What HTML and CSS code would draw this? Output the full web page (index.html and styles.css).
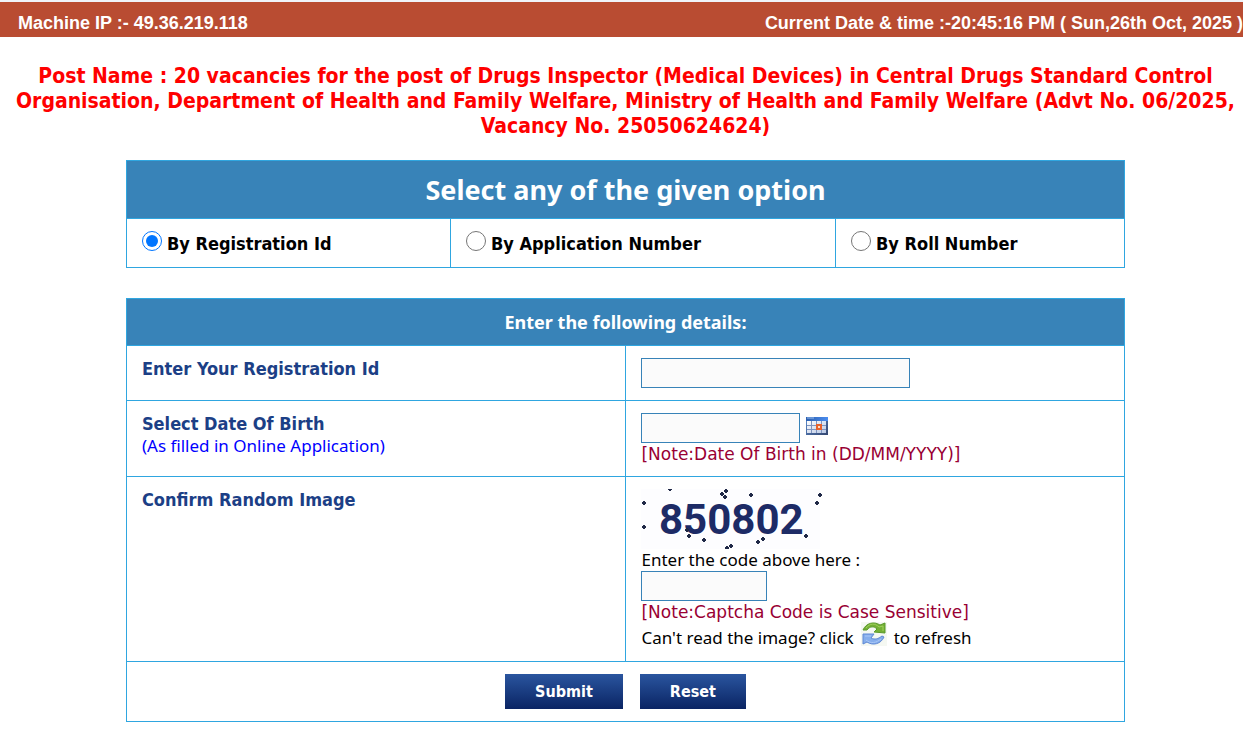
FILE: index.html
```html
<!DOCTYPE html>
<html lang="en">
<head>
<meta charset="utf-8">
<title>Drugs Inspector Vacancies</title>
<link rel="stylesheet" href="styles.css">
</head>
<body>
<header class="topbar">
  <span>Machine IP :- 49.36.219.118</span>
  <span>Current Date &amp; time :-20:45:16 PM ( Sun,26th Oct, 2025 )</span>
</header>
<main class="page">
  <h1 class="post-name">Post Name : 20 vacancies for the post of Drugs Inspector (Medical Devices) in Central Drugs Standard Control Organisation, Department of Health and Family Welfare, Ministry of Health and Family Welfare (Advt No. 06/2025, Vacancy No. 25050624624)</h1>
  <form class="forms">
    <section class="panel">
      <h2 class="panel-title panel-title-large">Select any of the given option</h2>
      <div class="options">
        <label class="option"><input class="radio" type="radio" name="by" checked><span>By Registration Id</span></label>
        <label class="option"><input class="radio" type="radio" name="by"><span>By Application Number</span></label>
        <label class="option"><input class="radio" type="radio" name="by"><span>By Roll Number</span></label>
      </div>
    </section>
    <section class="panel">
      <h2 class="panel-title">Enter the following details:</h2>
      <div class="row">
        <div class="cell"><label class="label" for="reg">Enter Your Registration Id</label></div>
        <div class="cell"><input class="text-box box-wide" id="reg" type="text"></div>
      </div>
      <div class="row">
        <div class="cell">
          <label class="label" for="dob">Select Date Of Birth</label>
          <span class="hint">(As filled in Online Application)</span>
        </div>
        <div class="cell">
          <div class="date-line">
            <input class="text-box box-date" id="dob" type="text">
            <button class="icon-button" type="button" aria-label="Open calendar">
              <svg width="22" height="18" viewBox="0 0 22 18">
                <defs>
                  <linearGradient id="frame" x1="0" y1="0" x2="1" y2="1"><stop offset="0" stop-color="#5f8fd0"/><stop offset="1" stop-color="#34466f"/></linearGradient>
                  <linearGradient id="bar" x1="0" y1="0" x2="1" y2="0"><stop offset="0" stop-color="#2c5fae"/><stop offset="1" stop-color="#4b8df0"/></linearGradient>
                  <linearGradient id="days" x1="0" y1="0" x2="1" y2="1"><stop offset="0" stop-color="#ffffff"/><stop offset="1" stop-color="#b9c8e4"/></linearGradient>
                </defs>
                <rect width="22" height="18" fill="url(#frame)"/>
                <rect width="22" height="4" fill="url(#bar)"/>
                <path d="M1 1h7" stroke="#9cc0ee"/>
                <rect x="1" y="4" width="19" height="12" fill="url(#days)"/>
                <path d="M5.500 4v12M10.500 4v12M15.500 4v12M1 8.500h19M1 12.500h19" stroke="#7f94c0"/>
                <rect x="11" y="8" width="4" height="4" fill="#fbd9c8" stroke="#e8622c" stroke-width="2"/>
              </svg>
            </button>
          </div>
          <span class="note">[Note:Date Of Birth in (DD/MM/YYYY)]</span>
        </div>
      </div>
      <div class="row">
        <div class="cell"><label class="label" for="code">Confirm Random Image</label></div>
        <div class="cell">
          <svg class="captcha" width="181" height="60" viewBox="0 0 181 60">
            <rect width="179" height="60" fill="#fdfdff"/>
            <text class="captcha-digits" x="18" y="45">850802</text>
            <g fill="#202947">
              <path id="speck" d="M2 12h2v1h1v2h-1v1h-2v-1h-1v-2h1z"/>
              <use href="#speck" y="24"/>
              <use href="#speck" x="26" y="-14"/>
              <use href="#speck" x="78" y="-9"/>
              <use href="#speck" x="82" y="-12"/>
              <use href="#speck" x="81" y="-6"/>
              <use href="#speck" x="107" y="-8"/>
              <use href="#speck" x="173"/>
              <use href="#speck" x="176" y="-8"/>
              <use href="#speck" x="162" y="33"/>
              <use href="#speck" x="45" y="33"/>
              <use href="#speck" x="43" y="27"/>
              <use href="#speck" x="60" y="37"/>
              <use href="#speck" x="87" y="43"/>
              <use href="#speck" x="83" y="45"/>
              <use href="#speck" x="114" y="39"/>
              <use href="#speck" x="119" y="36"/>
            </g>
          </svg>
          <span class="plain">Enter the code above here :</span>
          <input class="text-box box-code" id="code" type="text">
          <span class="note">[Note:Captcha Code is Case Sensitive]</span>
          <div class="refresh-line">
            <span>Can't read the image? click</span>
            <button class="icon-button" type="button" aria-label="Refresh image">
              <svg width="26" height="24" viewBox="0 0 26 24">
                <rect width="26" height="24" fill="#f5f8f2"/>
                <path d="M2 8C5 1 13-1 19 3l5-2v10l-11-1 3-3c-3-3-7-3-10 1z" fill="#74b035" stroke="#5a9a2c"/>
                <path d="M5 6c4-5 9-5 13-1l4-1v5" fill="none" stroke="#a0d05c"/>
                <path d="M2 12h11l-3 4c4 2 7 1 11-2l2 1c-3 7-11 9-17 5l-4 2z" fill="#86aeec" stroke="#5f88d4"/>
                <path d="M4 14h6M5 18c5 4 10 3 15-1" fill="none" stroke="#a9c7f7"/>
              </svg>
            </button>
            <span>to refresh</span>
          </div>
        </div>
      </div>
      <div class="actions">
        <button class="action" type="submit">Submit</button>
        <button class="action" type="reset">Reset</button>
      </div>
    </section>
  </form>
</main>
</body>
</html>
```
FILE: styles.css
```css
* {
  box-sizing: border-box;
}

body {
  margin: 0;
  background: #fff;
  color: #000;
  font-family: "Noto Sans", sans-serif;
  font-size: 17px;
  line-height: 22px;
}

.topbar {
  display: flex;
  justify-content: space-between;
  border-top: 2px solid #f0f3f9;
  padding: 10px 0 3px 18px;
  background: #b94c32;
  color: #fff;
  font: bold 18px/22px "Liberation Sans", sans-serif;
  white-space: nowrap;
}

.page {
  padding: 27px 0 14px 8px;
}

.post-name {
  margin: 0;
  color: #f00;
  font: bold 21px/25px "DejaVu Sans Condensed", sans-serif;
  text-align: center;
}

.forms {
  display: flex;
  flex-direction: column;
  gap: 30px;
  width: 80.9%;
  margin: 21px auto 0;
}

.panel {
  border: 1px solid #2fa6e0;
}

.panel-title {
  margin: 0;
  padding: 12px;
  background: #3883b8;
  color: #fff;
  font: bold 18px/22px "Noto Sans", sans-serif;
  text-align: center;
}

.panel-title-large {
  font-size: 27px;
  line-height: 33px;
}

.options {
  display: grid;
  grid-template-columns: 323fr 385fr 289fr;
  border-top: 1px solid #2fa6e0;
}

.option {
  display: flex;
  align-items: flex-start;
  gap: 5px;
  padding: 12px 15px 11px;
  font: bold 18px/24px "DejaVu Sans Condensed", sans-serif;
}

.option + .option {
  border-left: 1px solid #2fa6e0;
}

.option span {
  padding-top: 1px;
}

.radio {
  width: 20px;
  height: 20px;
  margin: 0;
}

.row {
  display: grid;
  grid-template-columns: 1fr 1fr;
  border-top: 1px solid #2fa6e0;
}

.cell {
  display: flex;
  flex-direction: column;
  align-items: flex-start;
  padding: 12px 15px;
}

.cell + .cell {
  border-left: 1px solid #2fa6e0;
}

.label {
  color: #1c3f86;
  font: bold 18px/22px "DejaVu Sans Condensed", sans-serif;
}

.hint {
  color: #00f;
}

.text-box {
  height: 30px;
  border: 1px solid #3883b8;
  padding: 0 6px;
  background: #fbfbfb;
  font: inherit;
}

.box-wide {
  width: 269px;
}

.box-date {
  width: 159px;
}

.box-code {
  width: 126px;
}

.date-line {
  display: flex;
  align-items: flex-start;
  gap: 6px;
}

.date-line .icon-button {
  padding-top: 4px;
}

.icon-button {
  display: flex;
  border: 0;
  padding: 0;
  background: none;
}

.note {
  padding-top: 2px;
  color: #903;
  font: 17px/19px "DejaVu Sans", sans-serif;
}

.captcha {
  display: block;
}

.captcha-digits {
  fill: #1d2b66;
  font: bold 42px Roboto, sans-serif;
}

.refresh-line {
  display: flex;
  align-items: flex-start;
  gap: 7px;
  height: 27px;
}

.refresh-line span {
  padding-top: 5px;
}

.actions {
  display: flex;
  justify-content: center;
  gap: 17px;
  border-top: 1px solid #2fa6e0;
  padding: 12px;
}

.action {
  border: 0;
  padding: 7px 30px;
  background: linear-gradient(#2a559f, #0a2463);
  color: #fff;
  font: bold 16px/21px "DejaVu Sans Condensed", sans-serif;
}
```
